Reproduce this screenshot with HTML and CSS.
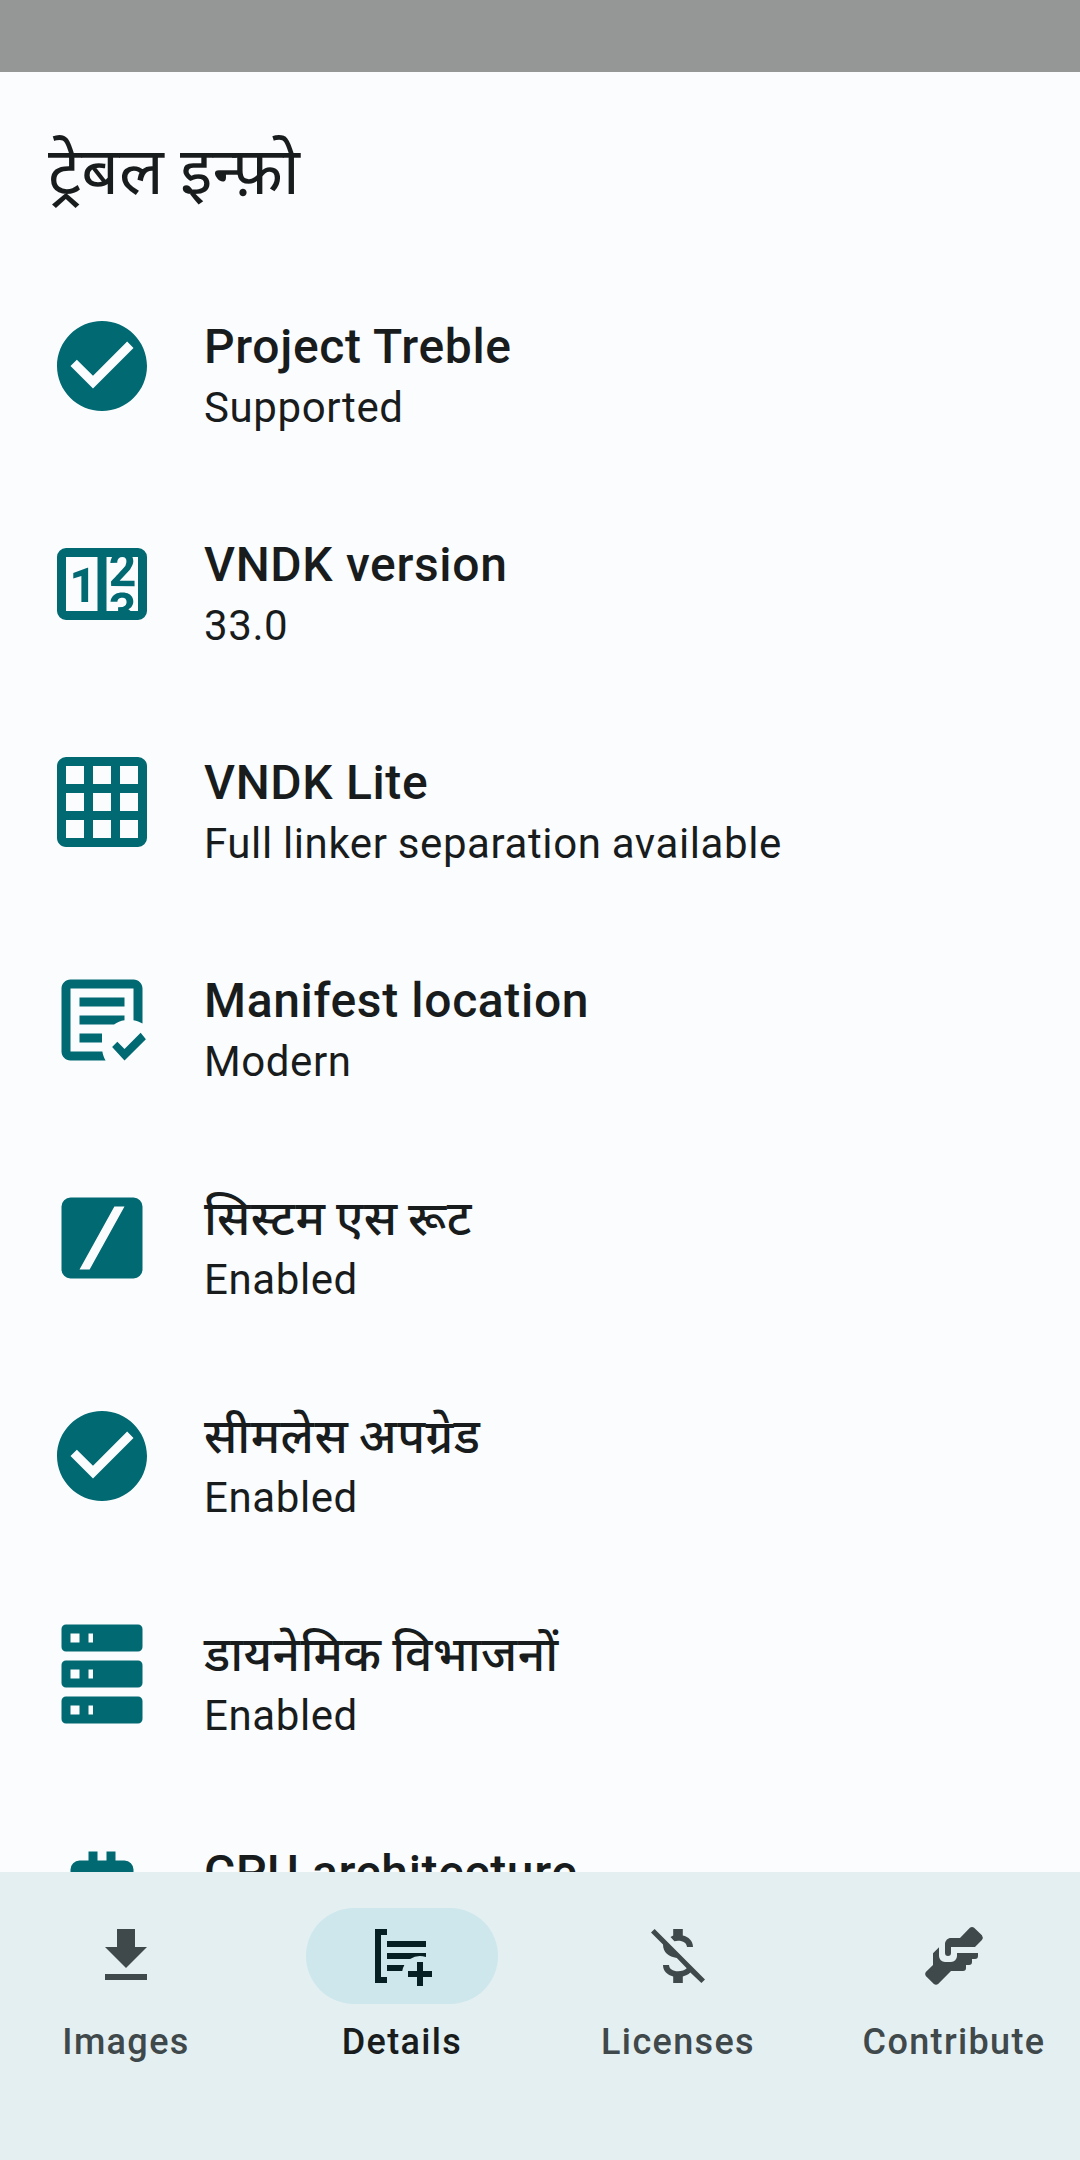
FILE: index.html
```html
<!DOCTYPE html>
<html lang="hi">
<head>
<meta charset="utf-8">
<title>ट्रेबल इन्फ़ो</title>
<link rel="stylesheet" href="styles.css">
</head>
<body>
<div class="status-bar"></div>
<header class="app-bar"><h1 class="app-title">ट्रेबल इन्फ़ो</h1></header>
<main class="list">
  <section class="row">
    <svg class="row-icon" viewBox="0 0 24 24"><path d="M12 2C6.5 2 2 6.5 2 12S6.5 22 12 22 22 17.5 22 12 17.5 2 12 2M10 17L5 12L6.41 10.59L10 14.17L17.59 6.58L19 8L10 17Z"/></svg>
    <div class="row-text"><h2 class="row-title">Project Treble</h2><p class="row-sub">Supported</p></div>
  </section>
  <section class="row">
    <svg class="row-icon" viewBox="0 0 24 24"><path d="M4,4H20A2,2 0 0,1 22,6V18A2,2 0 0,1 20,20H4A2,2 0 0,1 2,18V6A2,2 0 0,1 4,4M4,6V18H11V6H4M20,18V6H18.76C19,6.54 18.95,7.07 18.95,7.13C18.88,7.8 18.41,8.5 18.24,8.75L15.91,11.3L19.23,11.28L19.24,12.5L14.04,12.47L14,11.47C14,11.47 17.05,8.24 17.2,7.95C17.34,7.67 17.91,6 16.5,6C15.27,6.05 15.41,7.3 15.41,7.3L13.87,7.31C13.87,7.31 13.88,6.65 14.25,6H13V18H15.58L15.57,17.14L16.54,17.13C16.54,17.13 17.45,16.97 17.46,16.08C17.5,15.08 16.65,15.08 16.5,15.08C16.37,15.08 15.43,15.13 15.43,15.95H13.91C13.91,15.95 13.95,13.89 16.5,13.89C19.1,13.89 18.96,15.91 18.96,15.91C18.96,15.91 19,17.16 17.85,17.63L18.37,18H20M8.92,16H7.42V10.2L5.62,10.76V9.53L8.76,8.41H8.92V16Z"/></svg>
    <div class="row-text"><h2 class="row-title">VNDK version</h2><p class="row-sub">33.0</p></div>
  </section>
  <section class="row">
    <svg class="row-icon" viewBox="0 0 24 24"><path d="M10,4V8H14V4H10M16,4V8H20V4H16M16,10V14H20V10H16M16,16V20H20V16H16M14,20V16H10V20H14M8,20V16H4V20H8M8,14V10H4V14H8M8,8V4H4V8H8M10,14H14V10H10V14M4,2H20A2,2 0 0,1 22,4V20A2,2 0 0,1 20,22H4C2.92,22 2,21.1 2,20V4A2,2 0 0,1 4,2Z"/></svg>
    <div class="row-text"><h2 class="row-title">VNDK Lite</h2><p class="row-sub">Full linker separation available</p></div>
  </section>
  <section class="row">
    <svg class="row-icon" viewBox="0 0 24 24"><path d="M17 21L14.25 18L15.41 16.84L17 18.43L20.59 14.84L21.75 16.25M12.8 21H5C3.89 21 3 20.11 3 19V5C3 3.89 3.89 3 5 3H19C20.11 3 21 3.89 21 5V12.8C20.39 12.45 19.72 12.2 19 12.08V5H5V19H12.08C12.2 19.72 12.45 20.39 12.8 21M12 17H7V15H12M14.68 13H7V11H17V12.08C16.15 12.22 15.37 12.54 14.68 13M17 9H7V7H17"/></svg>
    <div class="row-text"><h2 class="row-title">Manifest location</h2><p class="row-sub">Modern</p></div>
  </section>
  <section class="row">
    <svg class="row-icon" viewBox="0 0 24 24"><path d="M5 3H19A2 2 0 0 1 21 5V19A2 2 0 0 1 19 21H5A2 2 0 0 1 3 19V5A2 2 0 0 1 5 3M14.75 5L7 19H9.25L17 5Z"/></svg>
    <div class="row-text"><h2 class="row-title hindi">सिस्टम एस रूट</h2><p class="row-sub">Enabled</p></div>
  </section>
  <section class="row">
    <svg class="row-icon" viewBox="0 0 24 24"><path d="M12 2C6.5 2 2 6.5 2 12S6.5 22 12 22 22 17.5 22 12 17.5 2 12 2M10 17L5 12L6.41 10.59L10 14.17L17.59 6.58L19 8L10 17Z"/></svg>
    <div class="row-text"><h2 class="row-title hindi">सीमलेस अपग्रेड</h2><p class="row-sub">Enabled</p></div>
  </section>
  <section class="row">
    <svg class="row-icon" viewBox="0 0 24 24"><path d="M4,1H20A1,1 0 0,1 21,2V6A1,1 0 0,1 20,7H4A1,1 0 0,1 3,6V2A1,1 0 0,1 4,1M4,9H20A1,1 0 0,1 21,10V14A1,1 0 0,1 20,15H4A1,1 0 0,1 3,14V10A1,1 0 0,1 4,9M4,17H20A1,1 0 0,1 21,18V22A1,1 0 0,1 20,23H4A1,1 0 0,1 3,22V18A1,1 0 0,1 4,17M9,5H10V3H9V5M9,13H10V11H9V13M9,21H10V19H9V21M5,3V5H7V3H5M5,11V13H7V11H5M5,19V21H7V19H5Z"/></svg>
    <div class="row-text"><h2 class="row-title hindi">डायनेमिक विभाजनों</h2><p class="row-sub">Enabled</p></div>
  </section>
  <section class="row">
    <svg class="row-icon" viewBox="0 0 24 24"><path d="M9,3V5H7A2,2 0 0,0 5,7V9H3V11H5V13H3V15H5V17A2,2 0 0,0 7,19H9V21H11V19H13V21H15V19H17A2,2 0 0,0 19,17V15H21V13H19V11H21V9H19V7A2,2 0 0,0 17,5H15V3H13V5H11V3Z"/></svg>
    <div class="row-text"><h2 class="row-title">CPU architecture</h2></div>
  </section>
</main>
<nav class="nav">
  <a class="nav-item">
    <span class="pill"><svg class="nav-icon" viewBox="0 0 24 24"><path d="M5,20H19V18H5M19,9H15V3H9V9H5L12,16L19,9Z"/></svg></span>
    <span class="nav-label">Images</span>
  </a>
  <a class="nav-item active">
    <span class="pill"><svg class="nav-icon" viewBox="0 0 24 24"><path d="M3 3H7V5H5V19H7V21H3ZM7 7H20V9H7ZM7 11H20V12.34A6 6 0 0 0 14.68 13H7ZM7 15H12.8A6 6 0 0 0 12.08 17H7ZM17 14H19V17H22V19H19V22H17V19H14V17H17Z"/></svg></span>
    <span class="nav-label">Details</span>
  </a>
  <a class="nav-item">
    <span class="pill"><svg class="nav-icon" viewBox="0 0 24 24"><path d="M4.2 3L3 4.2L7 8.2C7 10.9 8.9 12.2 11.6 12.7L14.9 16.1C14.3 16.8 13.3 17.1 12 17.1C10.2 17.1 9.1 16.3 9 15H7C7 17 8.5 18.4 10.4 18.8V21H13.6V18.8C14.5 18.6 15.4 18.2 16.1 17.5L19.8 21L21 19.8ZM12 6.9C13.8 6.9 14.9 7.7 15 9H17C17 7 15.5 5.6 13.6 5.2V3H10.4V5.2L9.5 5.7L10.8 7.1C11.2 7 11.6 6.9 12 6.9Z"/></svg></span>
    <span class="nav-label">Licenses</span>
  </a>
  <a class="nav-item">
    <span class="pill"><svg class="nav-icon" viewBox="0 0 24 24"><path d="M21.3 5.1L18.7 2.6Q18 2.1 17.3 2.6L14 6H11C9.9 6 9 6.9 9 8V11A1 1 0 0 0 11 11V9H19L21.3 6.7Q21.9 5.9 21.3 5.1ZM7 9.1L5 11.1V15L2.6 17.3Q2.1 18 2.6 18.7L5.3 21.3Q6 21.8 6.7 21.3L11 17H15A1 1 0 0 0 16 16V15H17A1 1 0 0 0 18 14V13H19A1 1 0 0 0 20 12V11H13V12A2 2 0 0 1 11 14H9A2 2 0 0 1 7 12Z"/></svg></span>
    <span class="nav-label">Contribute</span>
  </a>
</nav>
</body>
</html>
```
FILE: styles.css
```css
* { box-sizing: border-box; }
body {
  margin: 0;
  width: 1080px;
  height: 2160px;
  display: flex;
  flex-direction: column;
  overflow: hidden;
  background: #fbfcfe;
  color: #191c1d;
  font-family: Roboto, "Noto Sans", "Noto Sans Devanagari", sans-serif;
}
h1, h2, p { margin: 0; font-weight: 400; }
.status-bar { height: 72px; flex: none; background: #959796; }
.app-bar {
  height: 192px;
  flex: none;
  display: flex;
  align-items: center;
  padding: 8px 48px 0;
}
.app-title { font-size: 66px; line-height: 84px; }
.list { flex: 1; min-height: 0; overflow: hidden; }
.row {
  height: 218px;
  display: flex;
  gap: 48px;
  padding: 48px 48px 0;
}
.row-icon { width: 108px; height: 108px; flex: none; fill: #006972; }
.row-title {
  font-size: 48px;
  font-weight: 500;
  line-height: 70px;
  letter-spacing: 0.65px;
}
.hindi { letter-spacing: 0.45px; word-spacing: -1.8px; }
.row-sub {
  font-size: 42px;
  line-height: 52px;
  letter-spacing: 0.6px;
  word-spacing: -0.8px;
  white-space: nowrap;
}
.nav {
  height: 288px;
  flex: none;
  display: flex;
  gap: 24px;
  padding-top: 36px;
  background: #e4eff1;
}
.nav-item {
  flex: 1 1 0;
  display: flex;
  flex-direction: column;
  align-items: center;
  gap: 14px;
  color: #3f484a;
}
.pill {
  width: 192px;
  height: 96px;
  display: flex;
  align-items: center;
  justify-content: center;
  border-radius: 48px;
}
.nav-icon { width: 72px; height: 72px; fill: currentColor; }
.nav-label { font-size: 36px; font-weight: 500; line-height: 48px; letter-spacing: 1.35px; }
.active { color: #191c1d; }
.active .pill { background: #cde7ec; color: #051f23; }
```
